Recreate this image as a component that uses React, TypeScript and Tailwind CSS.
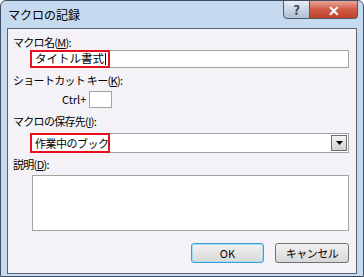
const jp = { fontFamily: '"Noto Sans CJK JP", "Noto Sans", sans-serif' };

function Label({ text, k }: { text: string; k: string }) {
  return (
    <div className="h-[15px] leading-[15px] text-[11px] tracking-[-0.7px] text-black whitespace-nowrap">
      {text}(<span className="underline">{k}</span>):
    </div>
  );
}

export default function App() {
  return (
    <div
      className="w-[364px] h-[277px] bg-[#c6daef] border border-[#3f4f63] rounded-t-[6px] flex flex-col overflow-hidden"
      style={jp}
    >
      {/* title bar */}
      <div className="h-[27px] flex items-start justify-between pl-[7px] pr-[5px]">
        <div className="mt-[6px] text-[12px] leading-[16px] text-black">マクロの記録</div>
        <div className="flex -mt-px">
          <div className="w-[27px] h-[19px] border border-[#4b5a6b] rounded-bl-[4px] bg-gradient-to-b from-[#e6eef6] to-[#aebfd2] flex items-center justify-center text-[13px] font-bold text-[#3a4656] leading-none">
            ?
          </div>
          <div className="w-[48px] h-[19px] border border-l-0 border-[#4b5a6b] rounded-br-[4px] bg-gradient-to-b from-[#e9a597] via-[#cf5b45] to-[#c23f28] flex items-center justify-center text-[14px] font-bold text-white leading-none">
            ✕
          </div>
        </div>
      </div>

      {/* client area */}
      <div className="mx-[6px] flex-1 mb-[2px] border border-[#5a6472] bg-[#f4f2f7] pl-[5px] flex flex-col">
        <div className="mt-[6px]">
          <Label text="マクロ名" k="M" />
        </div>
        <div className="ml-[17px] w-[319px] h-[18px] border border-[#a3a3a3] bg-white flex items-center">
          <div className="h-[18px] border-2 border-[#e8101c] -ml-px w-[80px] flex items-center pl-[3px] text-[11.5px] leading-none whitespace-nowrap">
            タイトル書式<span className="inline-block w-px h-[12px] bg-black ml-px" />
          </div>
        </div>

        <div className="mt-[5px]">
          <Label text="ショートカット キー" k="K" />
        </div>
        <div className="mt-[3px] flex items-center h-[17px]">
          <span className="ml-[49px] text-[11px] leading-none">Ctrl+</span>
          <div className="ml-[3px] w-[23px] h-[17px] border border-[#a3a3a3] bg-white" />
        </div>

        <div className="mt-[6px]">
          <Label text="マクロの保存先" k="I" />
        </div>
        <div className="mt-[4px] ml-[17px] w-[319px] h-[20px] border border-[#a3a3a3] bg-white flex items-center justify-between">
          <div className="h-[20px] border-2 border-[#e8101c] -ml-px w-[80px] flex items-center pl-[3px] text-[11px] tracking-[-0.5px] leading-none whitespace-nowrap">
            作業中のブック
          </div>
          <div className="w-[16px] h-[16px] mr-px border border-[#6d6d6d] bg-gradient-to-b from-[#f2f2f2] to-[#d2d2d2] flex items-center justify-center">
            <svg width="7" height="4" viewBox="0 0 7 4">
              <path d="M0 0h7L3.5 4z" fill="#000" />
            </svg>
          </div>
        </div>

        <div className="mt-[4px]">
          <Label text="説明" k="D" />
        </div>
        <div className="mt-[3px] ml-[19px] w-[317px] h-[56px] border border-[#a3a3a3] bg-white" />

        <div className="mt-[12px] flex justify-end pr-[7px] gap-[11px]">
          <button className="w-[73px] h-[20px] rounded-[3px] border border-[#3c9ed6] bg-gradient-to-b from-[#f2f2f2] to-[#d8d8d8] text-[11px] leading-none text-black shadow-[inset_0_0_0_1px_#a8dcf5]">
            OK
          </button>
          <button className="w-[74px] h-[20px] rounded-[3px] border border-[#707070] bg-gradient-to-b from-[#f2f2f2] to-[#d8d8d8] text-[11px] tracking-[-0.5px] leading-none text-black">
            キャンセル
          </button>
        </div>
      </div>
    </div>
  );
}
